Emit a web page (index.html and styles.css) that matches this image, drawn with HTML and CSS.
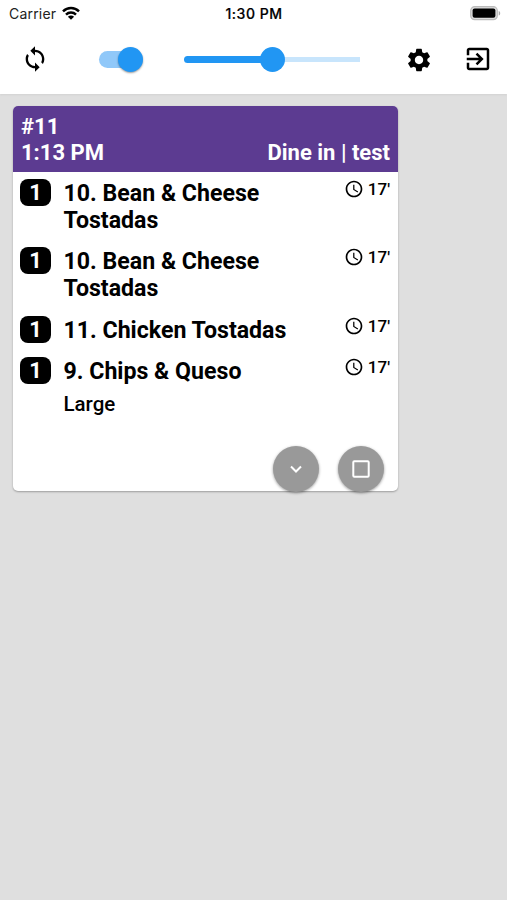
FILE: index.html
```html
<!DOCTYPE html>
<html lang="en">
<head>
<meta charset="utf-8">
<meta name="viewport" content="width=device-width, initial-scale=1">
<title>Kitchen orders</title>
<link rel="stylesheet" href="styles.css">
</head>
<body>
<svg class="defs" aria-hidden="true">
  <symbol id="clock" viewBox="0 0 24 24"><path d="M11.99 2C6.47 2 2 6.48 2 12s4.47 10 9.99 10C17.52 22 22 17.52 22 12S17.52 2 11.99 2zM12 20c-4.42 0-8-3.58-8-8s3.58-8 8-8 8 3.58 8 8-3.58 8-8 8zm.5-13H11v6l5.25 3.15.75-1.23-4.5-2.67z"/></symbol>
</svg>
<header class="top">
  <div class="status">
    <div class="carrier"><span>Carrier</span>
      <svg class="wifi" viewBox="0 0 18 14"><g fill="none" stroke="#000" stroke-width="2.5"><path d="M1 5.3C5.6.9 12.4.9 17 5.3"/><path d="M4 8.6c2.8-2.7 7.2-2.7 10 0"/></g><path d="M9 13.7 5.9 10.7c1.8-1.6 4.4-1.6 6.2 0z"/></svg>
    </div>
    <div class="clock">1:30 PM</div>
    <svg class="battery" viewBox="0 0 31 15"><rect x=".7" y=".7" width="26.6" height="13" rx="4" fill="#ddd" stroke="#bbb" stroke-width="1.2"/><rect x="2.6" y="2.6" width="22.8" height="9.2" rx="2"/><path d="M28.7 5v4.6c2-.7 2-3.9 0-4.6z" fill="#aaa"/></svg>
  </div>
  <div class="toolbar">
    <svg class="sync" viewBox="0 0 24 24"><path d="M12 4V1L8 5l4 4V6c3.31 0 6 2.69 6 6 0 1.01-.25 1.97-.7 2.8l1.46 1.46C19.54 15.03 20 13.57 20 12c0-4.42-3.58-8-8-8zm0 14c-3.31 0-6-2.69-6-6 0-1.01.25-1.97.7-2.8L5.24 7.74C4.46 8.97 4 10.43 4 12c0 4.42 3.58 8 8 8v3l4-4-4-4v3z"/></svg>
    <div class="toggle"><span class="toggle-knob"></span></div>
    <div class="slider"><span class="fill"></span><span class="slider-knob"></span><span class="rest"></span></div>
    <svg class="gear" viewBox="0 0 24 24"><path d="M19.14 12.94c.04-.3.06-.61.06-.94 0-.32-.02-.64-.07-.94l2.03-1.58c.18-.14.23-.41.12-.61l-1.92-3.32c-.12-.22-.37-.29-.59-.22l-2.39.96c-.5-.38-1.03-.7-1.62-.94l-.36-2.54c-.04-.24-.24-.41-.48-.41h-3.84c-.24 0-.43.17-.47.41l-.36 2.54c-.59.24-1.13.57-1.62.94l-2.39-.96c-.22-.08-.47 0-.59.22L2.74 8.87c-.12.21-.08.47.12.61l2.03 1.58c-.05.3-.09.63-.09.94s.02.64.07.94l-2.03 1.58c-.18.14-.23.41-.12.61l1.92 3.32c.12.22.37.29.59.22l2.39-.96c.5.38 1.03.7 1.62.94l.36 2.54c.05.24.24.41.48.41h3.84c.24 0 .44-.17.47-.41l.36-2.54c.59-.24 1.13-.56 1.62-.94l2.39.96c.22.08.47 0 .59-.22l1.92-3.32c.12-.22.07-.47-.12-.61l-2.01-1.58zM12 15.6c-1.98 0-3.6-1.62-3.6-3.6s1.62-3.6 3.6-3.6 3.6 1.62 3.6 3.6-1.62 3.6-3.6 3.6z"/></svg>
    <svg class="exit" viewBox="0 0 24 24"><path d="M10.09 15.59L11.5 17l5-5-5-5-1.41 1.41L12.67 11H3v2h9.67l-2.58 2.59zM19 3H5c-1.11 0-2 .9-2 2v4h2V5h14v14H5v-4H3v4c0 1.1.89 2 2 2h14c1.1 0 2-.9 2-2V5c0-1.1-.9-2-2-2z"/></svg>
  </div>
</header>
<main>
  <article class="card">
    <div class="card-head">
      <div>#11</div>
      <div class="head-row"><span>1:13 PM</span><span>Dine in | test</span></div>
    </div>
    <div class="items">
      <div class="item"><span class="qty">1</span><div class="name">10. Bean &amp; Cheese Tostadas</div><div class="time"><svg><use href="#clock"/></svg>17'</div></div>
      <div class="item"><span class="qty">1</span><div class="name">10. Bean &amp; Cheese Tostadas</div><div class="time"><svg><use href="#clock"/></svg>17'</div></div>
      <div class="item"><span class="qty">1</span><div class="name">11. Chicken Tostadas</div><div class="time"><svg><use href="#clock"/></svg>17'</div></div>
      <div class="item"><span class="qty">1</span><div class="name">9. Chips &amp; Queso<div class="option">Large</div></div><div class="time"><svg><use href="#clock"/></svg>17'</div></div>
    </div>
    <div class="actions">
      <button class="fab" aria-label="Expand"><svg viewBox="0 0 24 24"><path d="m7 9.5 5 5 5-5"/></svg></button>
      <button class="fab" aria-label="Complete"><svg viewBox="0 0 24 24"><rect x="4.3" y="4.3" width="15.4" height="15.4" rx="1"/></svg></button>
    </div>
  </article>
</main>
</body>
</html>
```
FILE: styles.css
```css
* { box-sizing: border-box; }
body { margin: 0; height: 900px; background: #dfdfdf; font-family: Roboto, sans-serif; color: #000; overflow: hidden; }
svg { display: block; flex: none; }
.defs { display: none; }
.top { height: 94px; background: #fff; box-shadow: 0 1px 2px #d2d2d2; }
.status { height: 28px; display: grid; grid-template-columns: 1fr auto 1fr; align-items: center; padding: 0 6px 0 9px; font: 14px/28px Inter, sans-serif; }
.carrier { display: flex; align-items: center; gap: 6px; color: #222; font-size: 14px; letter-spacing: .2px; }
.wifi { width: 18px; height: 14px; margin-top: -2px; }
.clock { font-size: 14px; font-weight: 500; letter-spacing: .5px; margin-left: -2px; -webkit-text-stroke: .2px #000; }
.battery { width: 31px; height: 15px; justify-self: end; margin-top: -2px; }
.toolbar { height: 63px; display: flex; align-items: center; padding-left: 21px; }
.sync { width: 28px; height: 28px; margin-top: -1px; }
.toggle { width: 43px; height: 17px; margin-left: 50px; border-radius: 9px; background: #90c8f9; display: flex; align-items: center; justify-content: flex-end; }
.toggle-knob { width: 25px; height: 25px; flex: none; margin-right: -1px; border-radius: 50%; background: #2196f3; box-shadow: 0 1px 2px rgba(0,0,0,.4); }
.slider { width: 176px; margin-left: 42px; display: flex; align-items: center; }
.fill { flex: 1; height: 7px; border-radius: 4px 0 0 4px; background: #2196f3; }
.slider-knob { width: 25px; height: 25px; margin: 0 -1px; border-radius: 50%; background: #2196f3; z-index: 1; }
.rest { flex: 1; height: 5px; background: #c8e5fc; }
.gear { width: 28px; height: 28px; margin-left: 45px; }
.exit { width: 30px; height: 30px; margin: -1px 0 0 29.5px; }
main { padding: 12px 13px; }
.card { width: 385px; height: 385px; display: flex; flex-direction: column; background: #fff; border-radius: 5px; box-shadow: 0 1px 2px rgba(0,0,0,.3); }
.card-head { height: 66px; padding: 8px 8px 0; border-radius: 5px 5px 0 0; background: #5c3b91; color: #fff; font-size: 22px; font-weight: 700; line-height: 26px; }
.head-row { display: flex; justify-content: space-between; }
.items { padding: 8px 8px 0 7px; display: flex; flex-direction: column; gap: 14.3px; }
.item { display: flex; align-items: flex-start; }
.qty { width: 31px; height: 27px; flex: none; border-radius: 8px; background: #000; color: #fff; font-size: 22px; line-height: 27px; font-weight: 700; text-align: center; margin-top: -1px; }
.name { width: 240px; margin-left: 12.5px; font-size: 23.15px; line-height: 27px; font-weight: 700; }
.option { margin-top: 6px; font-size: 20.5px; font-weight: 500; }
.time { margin: -2px 0 0 auto; height: 22px; display: flex; align-items: center; gap: 4px; font-size: 17px; font-weight: 500; line-height: 22px; }
.time svg { width: 20px; height: 20px; }
.actions { margin-top: auto; display: flex; justify-content: flex-end; gap: 19px; padding-right: 14px; margin-bottom: -1px; }
.fab { width: 46px; height: 46px; padding: 0; border: 0; border-radius: 50%; background: #999; box-shadow: 0 1px 3px rgba(0,0,0,.4); display: flex; align-items: center; justify-content: center; }
.fab svg { width: 24px; height: 24px; fill: none; stroke: #fff; stroke-width: 2; }
```
